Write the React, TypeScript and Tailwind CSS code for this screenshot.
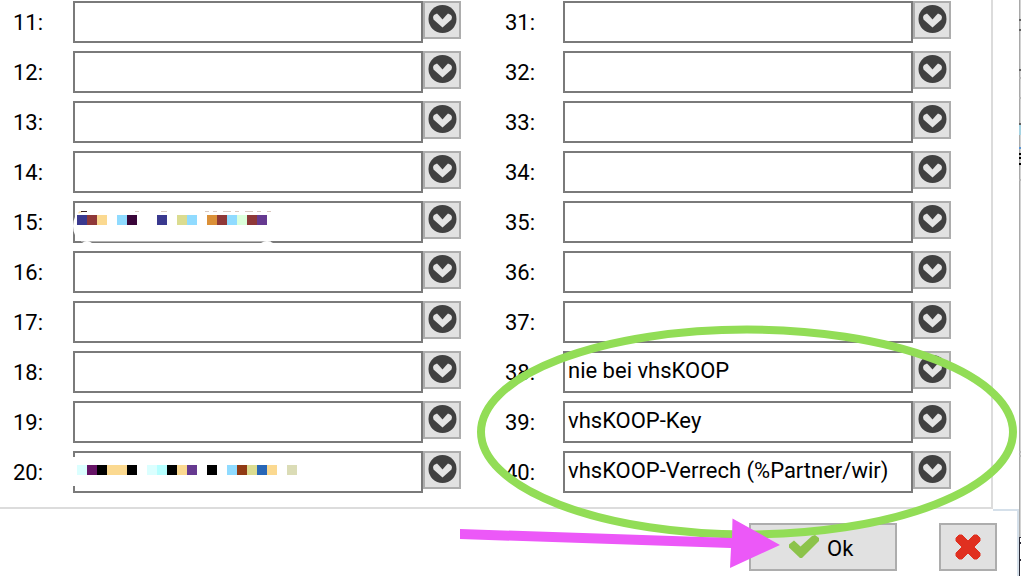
type Swatch = [x: number, color: string];

type FieldData = {
  id: number;
  value?: string;
  blocks?: Swatch[];
};

const blocks15: Swatch[] = [
  [4, '#3a398f'], [14, '#8f3838'], [24, '#fbd990'], [44, '#90dbff'], [54, '#3a0639'],
  [84, '#3a398f'], [104, '#dbdc90'], [114, '#90dbff'], [134, '#db9038'], [144, '#8f3838'],
  [154, '#90dbff'], [164, '#dbffdb'], [174, '#8f3838'], [184, '#663a90'],
];

const blocks20: Swatch[] = [
  [4, '#dbffff'], [14, '#661466'], [24, '#000000'], [34, '#fbd990'], [44, '#fbd990'],
  [54, '#000000'], [74, '#dbffff'], [84, '#b6ffff'], [94, '#000000'], [104, '#fbd990'],
  [114, '#663a90'], [134, '#000000'], [154, '#90dbff'], [164, '#903a14'], [174, '#dbdc90'],
  [184, '#2866b6'], [194, '#fbd990'], [214, '#dbdcb6'],
];

const leftFields: FieldData[] = [
  { id: 11 },
  { id: 12 },
  { id: 13 },
  { id: 14 },
  { id: 15, blocks: blocks15 },
  { id: 16 },
  { id: 17 },
  { id: 18 },
  { id: 19 },
  { id: 20, blocks: blocks20 },
];

const rightFields: FieldData[] = [
  { id: 31 },
  { id: 32 },
  { id: 33 },
  { id: 34 },
  { id: 35 },
  { id: 36 },
  { id: 37 },
  { id: 38, value: 'nie bei vhsKOOP' },
  { id: 39, value: 'vhsKOOP-Key' },
  { id: 40, value: 'vhsKOOP-Verrech (%Partner/wir)' },
];

function ChevronIcon() {
  return (
    <svg width="34" height="34" viewBox="0 0 34 34" aria-hidden="true">
      <circle cx="17.5" cy="16" r="14" fill="#404040" />
      <path
        d="M8 14 L9 12 L12 10.5 L14 12.5 L17.5 16.5 L21 12.5 L23 10.5 L26 12 L27 14 L26.500 16.500 L17.5 24.500 L8.500 16.500 Z"
        fill="#e4e4e4"
      />
    </svg>
  );
}

function CheckIcon() {
  return (
    <svg width="30" height="24" viewBox="0 0 30 24" aria-hidden="true">
      <path d="M0 9.500 L5 5.500 L11.500 11.500 L23 1 L26 0 L30 3 V6 L13 23 H11 L0 12.500 Z" fill="#8cc34b" />
    </svg>
  );
}

function CrossIcon() {
  return (
    <svg width="26" height="26" viewBox="0 0 26 26" aria-hidden="true">
      <path
        d="M1 4 L4 1 H7 L13 7 L19 1 H22 L25 4 V7 L19 13 L25 19 V22 L22 25 H19 L13 19 L7 25 H4 L1 22 V19 L7 13 L1 7 Z"
        fill="#e03020"
        stroke="#e03020"
        strokeLinejoin="round"
      />
    </svg>
  );
}

// Pixelated cover over a private value, it also hides parts of the frame
function Redaction({ id, blocks }: { id: number; blocks: Swatch[] }) {
  return (
    <svg className="absolute top-0 left-0 pointer-events-none" width="230" height="42" aria-hidden="true">
      {id === 15 ? (
        <>
          <path d="M2 16 Q0 20 0 25 Q0 30 2 34 Z" fill="#fff" />
          <path d="M8 40 H198 V41 H8 Z" fill="#b0b0b0" />
          <path d="M9 42 Q14 38 19 42 Z M188 42 Q194 38 200 42 Z" fill="#fff" />
          <path d="M6 12.500 V11 H9" fill="none" stroke="#fbd990" />
          <path d="M8 10.500 H14" stroke="#3a2020" />
          <path d="M62 10.500 H66 M88 10.500 H94 M132 10.500 H136 M140 10.500 H144 M150 10.500 H158 M162 10.500 H166 M172 10.500 H180 M184 10.500 H188 M194 10.500 H198" stroke="#d8c8c0" />
        </>
      ) : (
        <rect x="0" y="6" width="2" height="29" fill="#fff" />
      )}
      {blocks.map(([x, color]) => (
        <rect key={x} x={x} y="14" width="10" height="10" fill={color} />
      ))}
    </svg>
  );
}

function FieldRow({ field, labelClass }: { field: FieldData; labelClass: string }) {
  const inputId = `field-${field.id}`;
  return (
    <div className="flex items-start h-[42px]">
      <label htmlFor={inputId} className={`shrink-0 leading-[44px] ${labelClass}`}>
        {field.id}:
      </label>
      <div className="relative flex-1 min-w-0">
        <input
          id={inputId}
          type="text"
          defaultValue={field.value}
          className="block w-full h-[42px] border-2 border-[#7a7a7a] bg-white pl-[3px] pb-[3px] outline-none"
        />
        {field.blocks && <Redaction id={field.id} blocks={field.blocks} />}
      </div>
      <button
        type="button"
        aria-label={`Auswahl ${field.id}`}
        className="shrink-0 size-[38px] border-2 border-[#adadad] bg-[#e1e1e1]"
      >
        <ChevronIcon />
      </button>
    </div>
  );
}

// Sliver of the window behind the dialog
function BackgroundEdge() {
  return (
    <svg className="absolute inset-0 w-full h-full" viewBox="0 0 2 576" preserveAspectRatio="none" aria-hidden="true">
      <rect width="2" height="576" fill="#d2d2d2" />
      <rect width="1" height="576" fill="#a8a8a8" />
      <path d="M0 19 H2 V21 H0 Z M0 29 H2 V31 H0 Z M0 69 H2 V71 H0 Z M0 123 H2 V125 H0 Z" fill="#606060" />
      <rect x="0" y="125" width="2" height="10" fill="#a5d3e2" />
      <rect x="0" y="147" width="2" height="2" fill="#5a94d0" />
      <path d="M0 153 H2 V155 H0 Z M0 157 H2 V159 H0 Z M0 163 H2 V165 H0 Z" fill="#000" />
      <path d="M0 77 H2 V79 H0 Z M0 97 H2 V99 H0 Z M0 179 H2 V181 H0 Z M0 451 H2 V453 H0 Z M0 455 H2 V457 H0 Z" fill="#b4b4b4" />
      <rect x="0" y="537" width="2" height="39" fill="#fff" />
      <path d="M0 537 H2 V538 H1 V542 H2 V544 H1 V559 H2 V561 H1 V576 H0 Z" fill="#2a2a36" />
    </svg>
  );
}

export default function App() {
  return (
    <div className="relative flex bg-white text-black text-[22px] font-['Roboto','Liberation_Sans',sans-serif]">
      <div className="flex-1 min-w-0">
        <div className="flex">
          <div className="flex flex-1 min-w-0 border-r-2 border-b-2 border-[#dcdcdc] pt-px pb-3.5 pr-10">
            <div className="flex flex-col flex-[461] min-w-0 gap-2">
              {leftFields.map((f) => (
                <FieldRow key={f.id} field={f} labelClass="w-[73px] pl-[13px]" />
              ))}
            </div>
            <div className="flex flex-col flex-[490] min-w-0 gap-2">
              {rightFields.map((f) => (
                <FieldRow key={f.id} field={f} labelClass="w-[102px] pl-11" />
              ))}
            </div>
          </div>
          <div className="w-[26px] -mb-0.5 border-b-2 border-[#d5e0ea]" />
        </div>
        <div className="flex justify-end gap-[42px] border-r-2 border-[#d5e0ea] pt-3.5 pb-[5px] pr-5">
          <button
            type="button"
            className="flex items-center gap-2 w-[148px] h-12 border-2 border-[#adadad] bg-[#e1e1e1] pl-[38px]"
          >
            <CheckIcon />
            <span className="pt-0.5">Ok</span>
          </button>
          <button
            type="button"
            aria-label="Abbrechen"
            className="flex items-center justify-center w-[58px] h-12 border-2 border-[#adadad] bg-[#e1e1e1]"
          >
            <CrossIcon />
          </button>
        </div>
      </div>
      <div className="relative w-0.5">
        <BackgroundEdge />
      </div>

      <svg
        className="absolute inset-0 w-full h-full pointer-events-none"
        viewBox="0 0 1021 576"
        preserveAspectRatio="none"
        aria-hidden="true"
      >
        <ellipse cx="747" cy="432" rx="266" ry="102.500" fill="none" stroke="#92dd56" strokeWidth="8" />
        <path d="M460 529 L732 538 L732.500 518.500 L780 545 L730 568 L731 548 L460 539 Z" fill="#ec58f8" />
      </svg>
    </div>
  );
}
